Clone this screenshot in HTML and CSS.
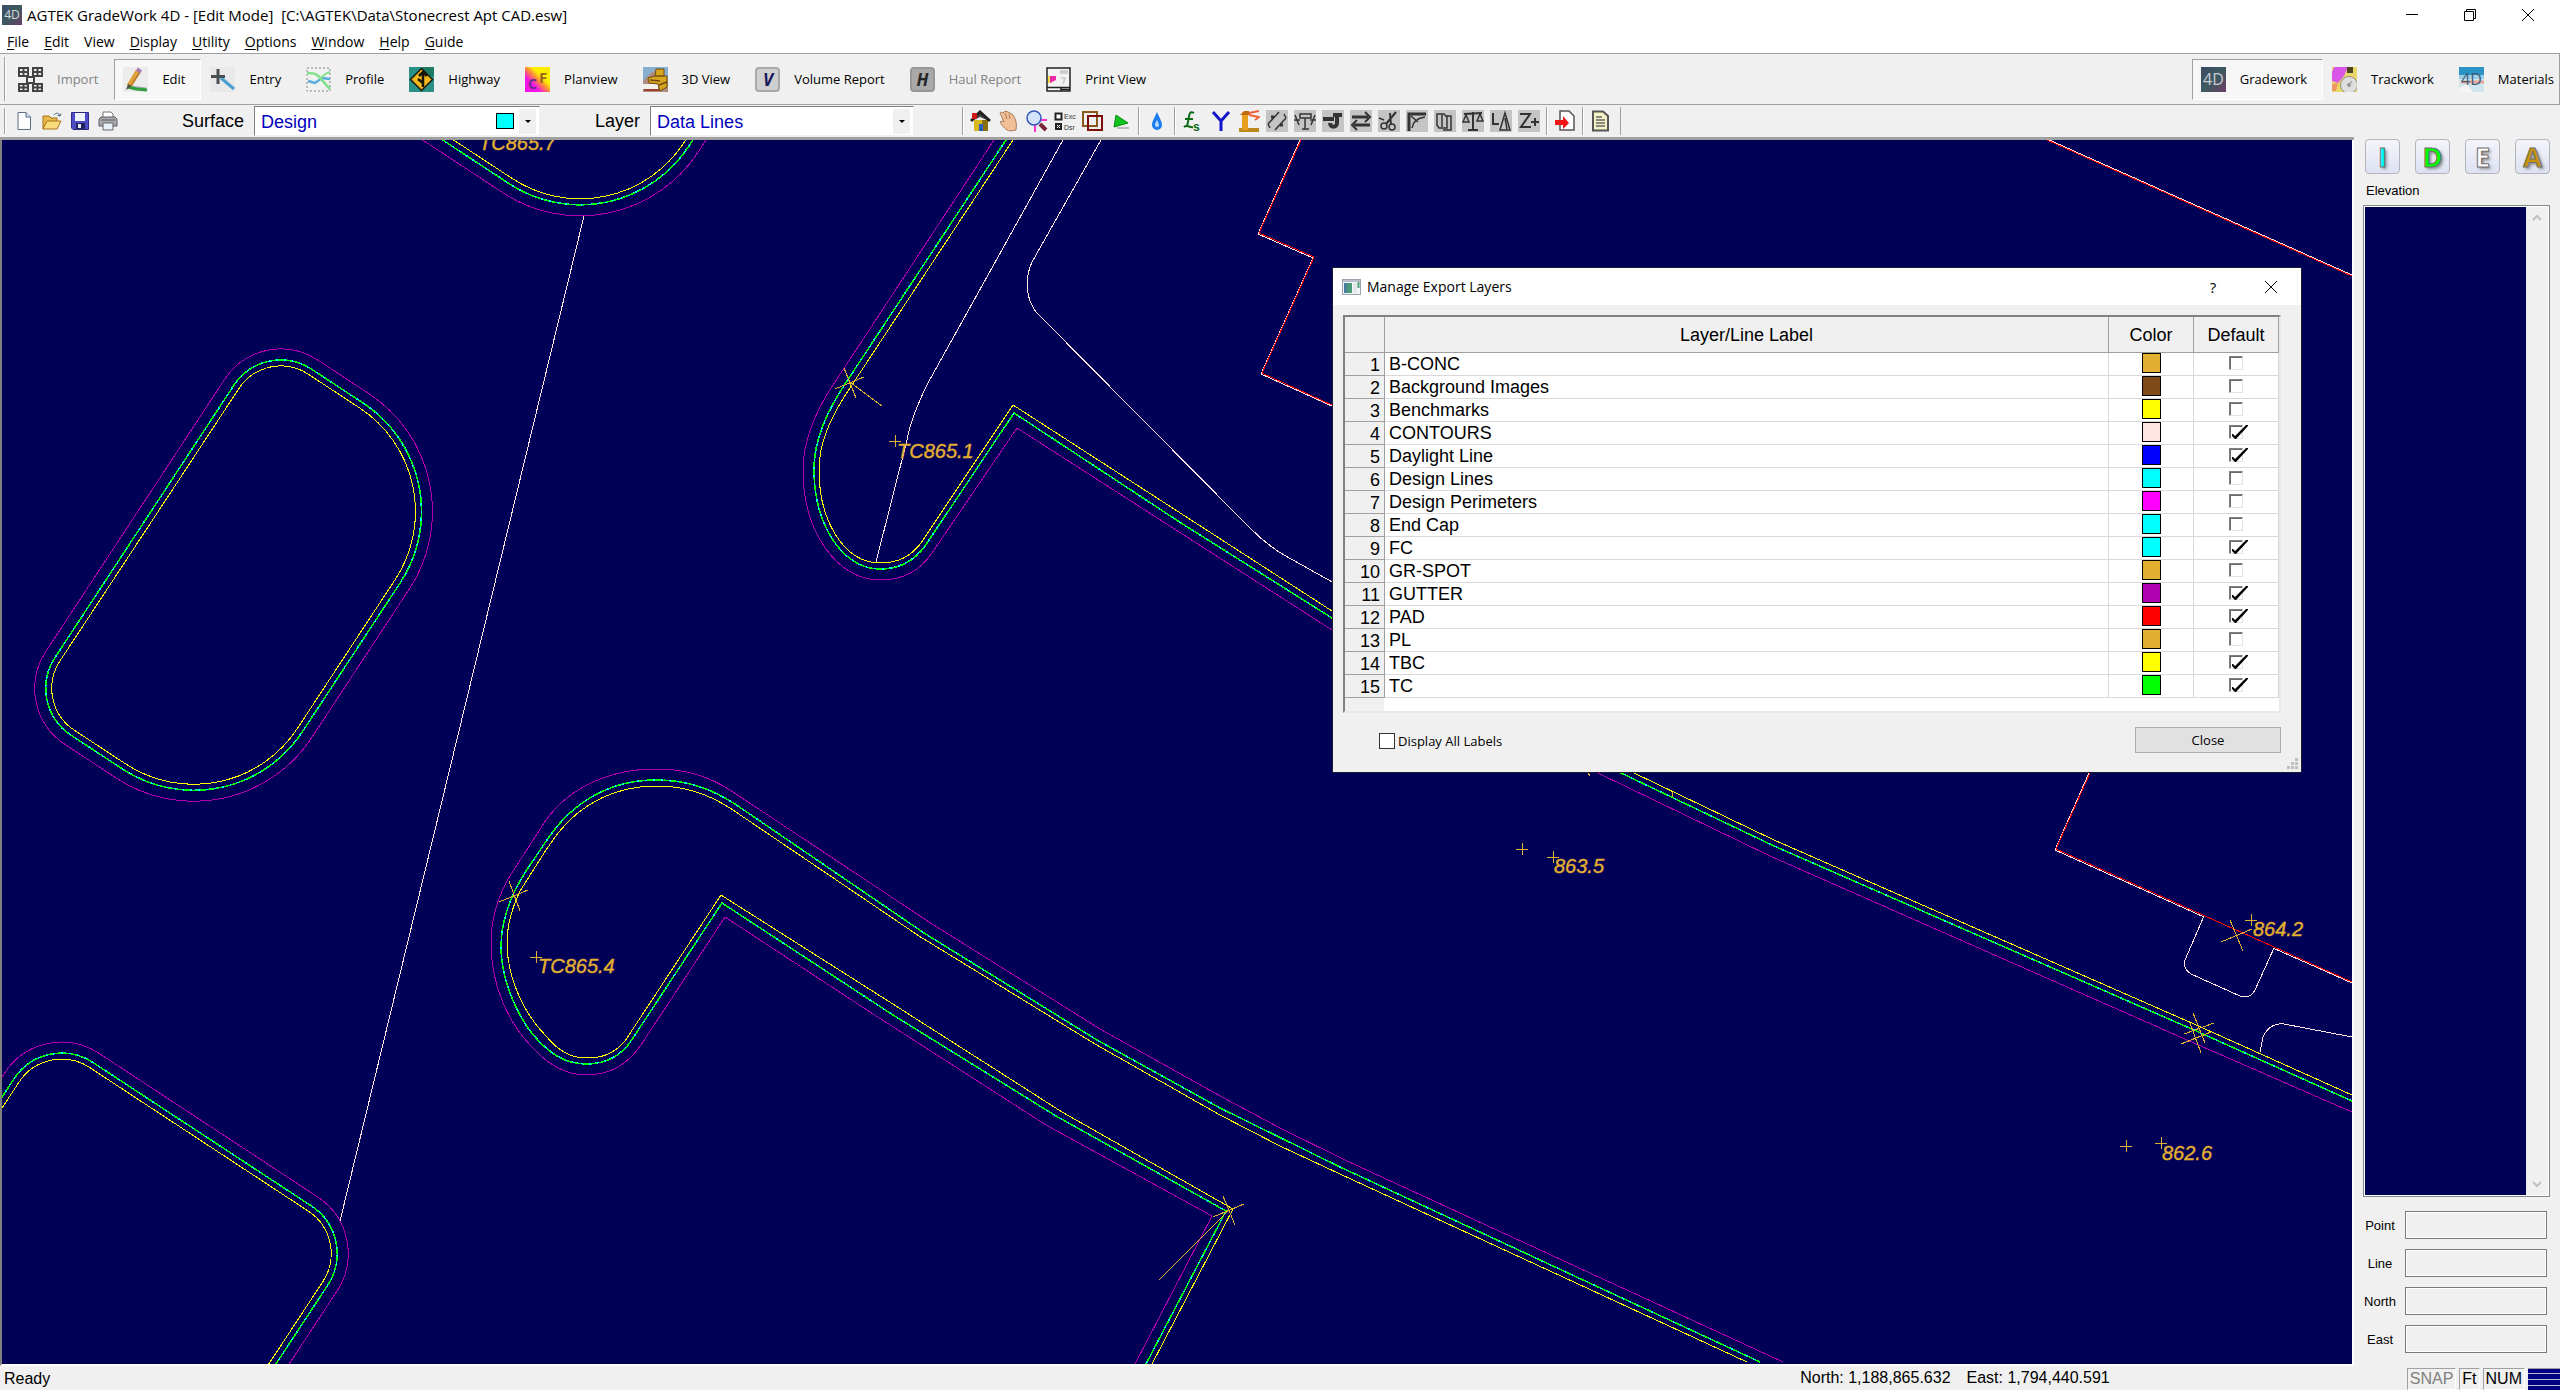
FILE: index.html
```html
<!DOCTYPE html>
<html lang="en">
<head>
    <meta charset="UTF-8">
    <meta name="viewport" content="width=device-width, initial-scale=1.0">
    <title>AGTEK GradeWork 4D</title>
    <link rel="stylesheet" href="styles.css">
</head>
<body>
    <header class="titlebar">
        <svg class="app-icon" viewBox="0 0 20 20">
            <defs>
                <linearGradient id="dusk" x1="0" y1="0" x2="1" y2="1">
                    <stop offset="0" stop-color="#3c4a62"/>
                    <stop offset="0.5" stop-color="#3d5a60"/>
                    <stop offset="1" stop-color="#6b3f66"/>
                </linearGradient>
            </defs>
            <rect width="20" height="20" fill="url(#dusk)"/>
            <text x="10" y="14" text-anchor="middle" font-size="12" fill="#d5d8de">4D</text>
        </svg>
        <span class="title">AGTEK GradeWork 4D - [Edit Mode]&nbsp; [C:\AGTEK\Data\Stonecrest Apt CAD.esw]</span>
        <div class="window-buttons">
            <button aria-label="Minimize"><svg viewBox="0 0 12 12"><path d="M0 5.5H12"/></svg></button>
            <button aria-label="Restore"><svg viewBox="0 0 12 12"><path d="M.5 2.5H9.5V11.5H.5ZM2.5 2.5V.5H11.5V9.5H9.5"/></svg></button>
            <button aria-label="Close window"><svg viewBox="0 0 12 12"><path d="M0 0L12 12M12 0L0 12"/></svg></button>
        </div>
    </header>

    <nav class="menubar">
        <button><u>F</u>ile</button>
        <button><u>E</u>dit</button>
        <button>View</button>
        <button><u>D</u>isplay</button>
        <button><u>U</u>tility</button>
        <button><u>O</u>ptions</button>
        <button><u>W</u>indow</button>
        <button><u>H</u>elp</button>
        <button><u>G</u>uide</button>
    </nav>

    <div class="toolbar">
        <span class="grip"></span>
        <button class="mode" disabled>
            <svg viewBox="0 0 25 25" fill="none" stroke="#444" stroke-width="2">
                <path d="M1 1H10V9H1ZM5.500 1V9M1 5H10M15 1H24V9H15ZM19.500 1V9M15 5H24M1 17H10V24H1ZM5.500 17V24M1 20.500H10M15 17H24V24H15ZM19.500 17V24M15 20.500H24M9 10H16V16H9Z"/>
            </svg>Import</button>
        <button class="mode active">
            <svg viewBox="0 0 25 25">
                <rect width="25" height="25" fill="#ececec"/>
                <path d="M6 20L23 22" stroke="#9aa" stroke-width="3"/>
                <path d="M5 20L13 22L24 23" stroke="#2f9e3c" stroke-width="3" fill="none"/>
                <path d="M6 19L15 4" stroke="#e0a13a" stroke-width="5"/>
                <path d="M8 19L17 5" stroke="#b87a24" stroke-width="1.500"/>
                <path d="M15 5L17 2" stroke="#a77bb0" stroke-width="5"/>
                <path d="M3 23L5 17L9 19Z" fill="#4a5548"/>
            </svg>Edit</button>
        <button class="mode">
            <svg viewBox="0 0 25 25">
                <rect width="25" height="25" fill="#e9e9e9"/>
                <path d="M11 11L24 22" stroke="#4a9fd0" stroke-width="3"/>
                <path d="M8 2V17M1 9.500H15" stroke="#4a4f52" stroke-width="3"/>
            </svg>Entry</button>
        <button class="mode">
            <svg viewBox="0 0 25 25" fill="none">
                <rect x="1" y="1" width="23" height="23" fill="#f0f1f1" stroke="#888" stroke-dasharray="2 2"/>
                <path d="M2 14L9 16L16 11L24 12" stroke="#55aede" stroke-width="2.500"/>
                <path d="M1 6C10 6 12 8 16 13S22 20 24 22" stroke="#82e08c" stroke-width="2.500"/>
                <path d="M14 13C17 8 20 6 24 5" stroke="#82e08c" stroke-width="2"/>
            </svg>Profile</button>
        <button class="mode">
            <svg viewBox="0 0 25 25">
                <rect width="25" height="25" fill="#2a9187"/>
                <rect x="14" width="11" height="9" fill="#1f7a66"/>
                <path d="M12.500 1.500L23.500 12.500L12.500 23.500L1.500 12.500Z" fill="#f2b91c" stroke="#1c1a10" stroke-width="1.500"/>
                <path d="M14 20V7M10 9L14 5L18 9M14 16L9 12" fill="none" stroke="#17140a" stroke-width="2.500"/>
            </svg>Highway</button>
        <button class="mode">
            <svg viewBox="0 0 25 25">
                <defs>
                    <linearGradient id="plan" x1="0" y1="1" x2="1" y2="0">
                        <stop offset="0.3" stop-color="#f413e8"/>
                        <stop offset="0.5" stop-color="#ff8a3a"/>
                        <stop offset="0.65" stop-color="#fff200"/>
                        <stop offset="1" stop-color="#f8e800"/>
                    </linearGradient>
                </defs>
                <rect width="25" height="25" fill="url(#plan)"/>
                <text x="3" y="22" font-size="14" font-weight="bold" fill="#6b2b8f">C</text>
                <text x="14" y="16" font-size="15" font-weight="bold" fill="#9a6420">F</text>
            </svg>Planview</button>
        <button class="mode">
            <svg viewBox="0 0 25 25">
                <rect width="25" height="14" fill="#87aed0"/>
                <path d="M0 14L8 6L16 2L25 12V25H0Z" fill="#b08a7c"/>
                <path d="M0 17H15V22H0Z" fill="#f4f2ee"/>
                <path d="M1 23H16" stroke="#a04030" stroke-width="2"/>
                <path d="M13 2H21V9H24V20L17 24L15 17L6 16L5 11L12 9Z" fill="#d9a520" stroke="#6d4e10"/>
                <path d="M12 9L21 9M7 13L17 14M16 18L24 15" stroke="#6d4e10" stroke-width="1.500"/>
            </svg>3D View</button>
        <button class="mode">
            <svg viewBox="0 0 25 25">
                <rect x="1" y="1" width="23" height="23" rx="3" fill="#cfcfcf" stroke="#a8a8a8" stroke-width="2"/>
                <text x="13" y="19" text-anchor="middle" font-size="17" font-weight="bold" font-style="italic" fill="#17175c">V</text>
            </svg>Volume Report</button>
        <button class="mode" disabled>
            <svg viewBox="0 0 25 25">
                <rect x="1" y="1" width="23" height="23" rx="3" fill="#a9a9a9" stroke="#979797" stroke-width="2"/>
                <text x="12.500" y="19" text-anchor="middle" font-size="17" font-weight="bold" font-style="italic" fill="#262626">H</text>
            </svg>Haul Report</button>
        <button class="mode">
            <svg viewBox="0 0 25 25">
                <rect x="1" y="1" width="23" height="23" fill="#f3f3f3" stroke="#222" stroke-width="1.500"/>
                <path d="M1 20.500H24M15 20V24M15 22.500H24" stroke="#222" stroke-width="1.500"/>
                <path d="M14 4H22M14 6H22" stroke="#aaa"/>
                <rect x="2" y="9" width="4" height="7" fill="#f5e04a"/>
                <path d="M4 9H10V13L4 16Z" fill="#ee2aa8"/>
                <path d="M15 11H19L17 17" fill="none" stroke="#ccc" stroke-width="1.500"/>
            </svg>Print View</button>

        <div class="products">
            <button class="mode active">
                <svg viewBox="0 0 25 25">
                    <rect width="25" height="25" fill="url(#dusk)"/>
                    <text x="12.500" y="18" text-anchor="middle" font-size="16" fill="#c6cbd2">4D</text>
                </svg>Gradework</button>
            <button class="mode">
                <svg viewBox="0 0 25 25">
                    <rect width="25" height="25" fill="#e8d86a"/>
                    <path d="M2 0H16L12 9L6 16L0 14V5Z" fill="#d957e6"/>
                    <path d="M6 16L4 24H0V17Z" fill="#ee9a60"/>
                    <rect x="15" y="0" width="6" height="6" fill="#4d4420"/>
                    <circle cx="17" cy="18" r="8.500" fill="#dedede" stroke="#97927c"/>
                    <circle cx="17" cy="18" r="2" fill="#999"/>
                    <path d="M17 18L20 14" stroke="#888"/>
                </svg>Trackwork</button>
            <button class="mode">
                <svg viewBox="0 0 25 25">
                    <rect width="25" height="25" fill="#cfe6ee"/>
                    <rect width="25" height="8" fill="#2c93c6"/>
                    <path d="M0 8H25V12H0Z" fill="#9ccfe6"/>
                    <path d="M2 15H25" stroke="#e8a79a" stroke-width="3"/>
                    <path d="M0 21L8 17L14 25H0Z" fill="#f4f4f4"/>
                    <text x="12.500" y="18" text-anchor="middle" font-size="16" fill="#3b5e78">4D</text>
                </svg>Materials</button>
        </div>
    </div>

    <main class="workspace">
        <div class="editor">
            <div class="tools">
                <span class="grip"></span>
                <div class="file-tools">
                    <button aria-label="New"><svg viewBox="0 0 20 20"><path d="M4 1.500H12L16.500 6V18.500H4Z" fill="#fdfdff" stroke="#5b6f86"/><path d="M12 1.500V6H16.500" fill="#cfdcec" stroke="#5b6f86"/></svg></button>
                    <button aria-label="Open"><svg viewBox="0 0 20 20"><path d="M1 18V5H7L9 7H15V10" fill="#e8b84a" stroke="#a87416"/><path d="M1 18L5 10H19L15 18Z" fill="#fbdc7c" stroke="#a87416"/><path d="M12 4C14 1 17 2 18 5M18 5L15.500 4.500M18 5L19 2.500" fill="none" stroke="#55657a"/></svg></button>
                    <button aria-label="Save"><svg viewBox="0 0 20 20"><path d="M1.500 1.500H18.500V18.500H3L1.500 17Z" fill="#4c4cc4" stroke="#2a2a86"/><rect x="5" y="2" width="10" height="8" fill="#eef2fb"/><rect x="6" y="12" width="9" height="6" fill="#23235c"/><rect x="8" y="13" width="3" height="4" fill="#e8e8f4"/></svg></button>
                    <button aria-label="Print"><svg viewBox="0 0 20 20"><path d="M5 1H13L15 3V8H5Z" fill="#fff" stroke="#777"/><path d="M1 8L3 6H17L19 8V15H1Z" fill="#a9abb0" stroke="#5c5e63"/><path d="M5 12H15V19H5Z" fill="#e8f0fa" stroke="#666"/><path d="M3 9H17" stroke="#5c5e63"/></svg></button>
                </div>
                <label class="field-label" for="surface">Surface</label>
                <div class="combo surface">
                    <select id="surface"><option>Design</option></select>
                    <span class="combo-swatch"></span>
                    <span class="combo-arrow"></span>
                </div>
                <label class="field-label layer-label" for="layer">Layer</label>
                <div class="combo layer">
                    <select id="layer"><option>Data Lines</option></select>
                    <span class="combo-arrow"></span>
                </div>
                <div class="view-tools">
                    <span class="sep"></span>
                    <button aria-label="Home"><svg viewBox="0 0 22 22"><path d="M4 10H18V21H4Z" fill="#d8b81c"/><path d="M12 10H18V21H12Z" fill="#8a6f10"/><path d="M2 11L10 3L19 11L10 7Z" fill="#444"/><path d="M1 11L10 2L20 11" fill="none" stroke="#222" stroke-width="3"/><rect x="2" y="3" width="5" height="6" fill="#d01818"/><rect x="9" y="14" width="4" height="7" fill="#2b5fc0"/></svg></button>
                    <button aria-label="Pan"><svg viewBox="0 0 22 22"><path d="M3 5C1 3 3 1 5 3L7 1L10 2L12 3L15 5C18 9 19 14 18 20L12 21C8 20 5 17 2 12L4 11L6 12Z" fill="#f2bf98" stroke="#a97a58"/><path d="M7 3L9 9M11 4L12 9" stroke="#a97a58"/></svg></button>
                    <button aria-label="Zoom"><svg viewBox="0 0 22 22"><path d="M9 22V10H21" fill="none" stroke="#ff2fd0" stroke-width="2"/><circle cx="8" cy="8" r="7" fill="#d4e2fb" stroke="#3257b8" stroke-width="1.500"/><path d="M14 14L20 20" stroke="#7a2438" stroke-width="4"/></svg></button>
                    <button aria-label="Exclude"><svg viewBox="0 0 22 22"><path d="M1.500 3.500H7.500V9.500H1.500Z" fill="#fff" stroke="#222" stroke-width="2"/><path d="M1 13H8V20H1Z" fill="#222"/><path d="M3 15L6 18M6 15L3 18" stroke="#fff"/><text x="10" y="9" font-size="7" fill="#333">Exc</text><text x="10" y="20" font-size="7" fill="#333">Dsr</text></svg></button>
                    <button aria-label="Windows"><svg viewBox="0 0 22 22" fill="none" stroke-width="2"><path d="M1 2H15V16H1Z" stroke="#8a5a1c"/><path d="M6 6H20V20H6Z" stroke="#7d0c0c"/></svg></button>
                    <button aria-label="Run"><svg viewBox="0 0 22 22"><path d="M7 18H19" stroke="#bbb" stroke-width="2"/><path d="M6 5L18 13L4 17Z" fill="#0fc41c" stroke="#0b8a14"/></svg></button>
                    <span class="sep"></span>
                    <button aria-label="Water"><svg viewBox="0 0 22 22"><path d="M11 2C13 7 16 11 16 15A5 5 0 0 1 6 15C6 11 9 7 11 2Z" fill="#1c7df0"/><path d="M11 10C12 12 13 14 13 15A2 2 0 0 1 9 15C9 13 10 12 11 10Z" fill="#b8dcff"/></svg></button>
                    <span class="sep"></span>
                    <button aria-label="Line style"><svg viewBox="0 0 22 22"><path d="M12 3C7 0 7 6 6 12L5 16M2 17C5 14 8 18 11 17M3 9H11" fill="none" stroke="#0a6b12" stroke-width="2"/><text x="11" y="21" font-size="12" font-weight="bold" fill="#0a6b12">s</text></svg></button>
                    <button aria-label="Branch"><svg viewBox="0 0 22 22"><path d="M3 2L11 11L19 2M11 11V21" fill="none" stroke="#1414c8" stroke-width="3"/></svg></button>
                    <button aria-label="Lighthouse"><svg viewBox="0 0 22 22"><path d="M1 20H21" stroke="#b88a20" stroke-width="4"/><path d="M4 20V3H10V20" fill="#e8a01c"/><path d="M2 5L6 1H11V5Z" fill="#c06a10"/><path d="M11 3L21 1M11 5L21 7L17 10" fill="none" stroke="#f0603c" stroke-width="2"/></svg></button>
                    <button aria-label="Offset"><svg class="gray" viewBox="0 0 22 22"><path d="M2 14L13 2M9 20L20 8M2 14L4 18M20 8L18 4"/><path d="M5 7H8M14 15H17" stroke-width="3"/></svg></button>
                    <button aria-label="Trim"><svg class="gray" viewBox="0 0 22 22"><path d="M0 10H6M16 10H22M6 4H17V8H6ZM11 8V19M8 19H15M1 5L5 15M21 5L17 15"/></svg></button>
                    <button aria-label="Join"><svg class="gray" viewBox="0 0 22 22"><path d="M1 9H12M15 3V13C15 18 8 18 8 13M11 5H20" stroke-width="4"/></svg></button>
                    <button aria-label="Swap"><svg class="gray" viewBox="0 0 22 22"><path d="M2 7H18M4 15H20" stroke-width="3"/><path d="M15 2L20 7L15 12M7 10L2 15L7 20" stroke-width="2"/></svg></button>
                    <button aria-label="Cut"><svg class="gray" viewBox="0 0 22 22"><path d="M18 2L8 14M12 3L13 15" stroke-width="2"/><circle cx="6" cy="16" r="3"/><circle cx="14" cy="17" r="3"/><path d="M1 8L6 10"/></svg></button>
                    <button aria-label="Fillet"><svg class="gray" viewBox="0 0 22 22"><path d="M3 21V4H20" stroke-width="3"/><path d="M6 18C7 11 11 8 19 7M5 6L12 12"/></svg></button>
                    <button aria-label="Copy"><svg class="gray" viewBox="0 0 22 22"><path d="M3 4H10L13 7V18H5L3 15ZM8 4V17M11 6H17V20H9" /></svg></button>
                    <button aria-label="Balance"><svg class="gray" viewBox="0 0 22 22"><path d="M2 4L20 3M11 2V19M6 20H16" stroke-width="2"/><path d="M1 12L4 5L7 12ZM15 11L18 4L21 11Z"/></svg></button>
                    <button aria-label="Label slope"><svg class="gray" viewBox="0 0 22 22"><path d="M3 3V14H9" stroke-width="2"/><path d="M15 3L20 20H10ZM15 8L17 19"/></svg></button>
                    <button aria-label="Raise elevation"><svg class="gray" viewBox="0 0 22 22"><path d="M2 4H12L3 17H13M13 12H21M17 8V16" stroke-width="2"/></svg></button>
                    <span class="sep"></span>
                    <button aria-label="Export"><svg viewBox="0 0 22 22"><path d="M6 1H15L20 6V20H6Z" fill="#fff" stroke="#555" stroke-width="1.500"/><path d="M1 10H9V6L15 13L9 19V15H1Z" fill="#f01414"/></svg></button>
                    <span class="sep"></span>
                    <button aria-label="Notes"><svg viewBox="0 0 22 22"><path d="M3 1.500H13L18 6V20.500H3Z" fill="#f4f2c4" stroke="#555" stroke-width="2"/><path d="M6 7H12M6 10H15M6 13H15M6 16H15" stroke="#666" stroke-width="1.500"/></svg></button>
                </div>
            </div>

            <div class="plan">
                <svg class="drawing" viewBox="2 140 2350 1224" preserveAspectRatio="xMinYMin slice">
                    <defs>
                        <!-- centre curb lines, stroked twice -->
                        <g id="curb">
                            <g transform="rotate(33.3)">
                                <path d="M463 137.500H524.500A130 130 0 0 1 654.500 267.500V445.500A130 130 0 0 1 524.500 575.500H463A56 56 0 0 1 407 519.500V193.500A56 56 0 0 1 463 137.500Z"/>
                                <path d="M604 1100V894A57 57 0 0 1 661 837H922.500A57 57 0 0 1 979.500 894V1100"/>
                                <path d="M656 -400V-256A130 130 0 0 1 526 -126H300"/>
                            </g>
                            <path d="M1006 140L849 378C826 412 814 440 814 470C814 525 843 569 880 569C900 569 914 561 925 546L1014 413L1181 523L1332 618L1480 702L1621 773L1774 846L2194 1030L2352 1101"/>
                            <path d="M1760 1362L1568 1273L1340 1167L1220 1108L1097 1040L924 933L735 804C710 788 686 780 656 780C612 780 575 800 549 837L528 868C510 895 501 922 501 947C501 980 518 1018 536 1038C552 1056 568 1064 586 1064C606 1064 622 1056 633 1038L722 903L893 1015L1056 1116L1226 1211L1146 1364"/>
                        </g>
                        <path id="cross" d="M-6 0H6M0 -6V6"/>
                    </defs>
                    <g class="contour">
                        <path d="M584 216L340 1221"/>
                        <path d="M1063 140L928 383C916 407 910 424 907 440L876 562"/>
                        <path d="M1101 140L1032 262C1024 280 1026 298 1036 312L1250 528C1262 540 1272 548 1284 555L1334 583"/>
                        <path d="M2204 916L2185 960C2183 966 2185 970 2191 974L2240 996C2248 998 2252 996 2255 990L2274 948"/>
                        <path d="M2260 1052L2263 1037C2267 1028 2274 1023 2284 1024L2352 1037"/>
                        <path d="M1300 140L1258 234L1313 258L1261 374L1334 407"/>
                        <path d="M2089 773L2055 850L2204 917M2273 948L2352 983M2047 139L2352 275"/>
                    </g>
                    <path class="pad" d="M1301 140L1259 233L1314 257L1262 373L1334 406M2090 773L2056 849L2352 982M2047 140L2352 276"/>
                    <g class="gutter">
                        <g transform="rotate(33.3)">
                            <path d="M463 126.500H524.500A141 141 0 0 1 665.500 267.500V445.500A141 141 0 0 1 524.500 586.500H463A67 67 0 0 1 396 519.500V193.500A67 67 0 0 1 463 126.500Z"/>
                            <path d="M593 1100V894A68 68 0 0 1 661 826H922.500A68 68 0 0 1 990.500 894V1100"/>
                            <path d="M667 -400V-256A141 141 0 0 1 526 -115H300"/>
                        </g>
                        <path d="M994 140L835 382C814 413 803 442 803 470C803 532 837 580 880 580C904 580 920 571 932 553L1017 428L1332 630L1460 702L1598 773L1770 856L2194 1043L2352 1112"/>
                        <path d="M1783 1362L1345 1160L1280 1128L1222 1097L1100 1029L929 922L730 790C706 775 684 769 656 769C610 769 570 787 546 820L508 879C496 901 491 922 491 943C491 985 508 1022 531 1046C548 1065 567 1075 586 1075C609 1075 628 1064 641 1045L725 917L870 1012L1046 1125L1212 1216L1135 1364"/>
                    </g>
                    <use href="#curb" class="face"/>
                    <use href="#curb" class="top"/>
                    <g class="back">
                        <g transform="rotate(33.3)">
                            <path d="M463 143.500H524.500A124 124 0 0 1 648.500 267.500V445.500A124 124 0 0 1 524.500 569.500H463A50 50 0 0 1 413 519.500V193.500A50 50 0 0 1 463 143.500Z"/>
                            <path d="M610 1100V894A51 51 0 0 1 661 843H922.500A51 51 0 0 1 973.500 894V1100"/>
                            <path d="M650 -400V-256A124 124 0 0 1 526 -132H300"/>
                        </g>
                        <path d="M1013 140L852 385C830 417 819 443 819 470C819 522 845 563 880 563C899 563 911 556 921 543L1013 405L1332 611L1480 693L1634 773L1774 840L2194 1024L2352 1095"/>
                        <path d="M1747 1362L1340 1174L1280 1146L1220 1115L1095 1044L919 936L730 808C706 793 684 786 656 786C616 786 582 803 558 833L546 850L520 891C511 910 507 928 507 943C507 980 526 1016 546 1036C558 1051 572 1058 586 1058C602 1058 614 1054 625 1041L721 895L896 1006L1062 1112L1233 1209L1152 1364"/>
                    </g>
                    <g class="marks">
                        <path d="M844 368L856 398M835 389L864 377M851 383L882 406"/>
                        <path d="M509 881L520 911M499 902L528 890"/>
                        <path d="M1223 1196L1235 1225M1213 1217L1244 1204M1229 1210L1159 1280"/>
                        <path d="M2230 920L2243 951M2221 942L2252 929"/>
                        <path d="M2193 1013L2205 1043M2184 1034L2214 1023M2190 1023L2201 1053M2181 1044L2211 1032"/>
                        <path d="M1588 773L1590 776M1672 792V797"/>
                        <use href="#cross" x="895" y="441"/>
                        <use href="#cross" x="536" y="957"/>
                        <use href="#cross" x="1522" y="849"/>
                        <use href="#cross" x="1553" y="857"/>
                        <use href="#cross" x="2126" y="1146"/>
                        <use href="#cross" x="2161" y="1143"/>
                        <use href="#cross" x="2251" y="920"/>
                    </g>
                    <g class="elevations">
                        <text x="479" y="150">TC865.7</text>
                        <text x="897" y="458">TC865.1</text>
                        <text x="538" y="973">TC865.4</text>
                        <text x="1554" y="873">863.5</text>
                        <text x="2253" y="936">864.2</text>
                        <text x="2162" y="1160">862.6</text>
                    </g>
                </svg>
            </div>
        </div>

        <aside class="side">
            <div class="surface-buttons">
                <button class="existing">I</button>
                <button class="design">D</button>
                <button class="extra">E</button>
                <button class="all">A</button>
            </div>
            <span class="side-title">Elevation</span>
            <div class="elevation-list">
                <div class="scroll">
                    <svg viewBox="0 0 10 8"><path d="M1 6L5 2L9 6"/></svg>
                    <svg viewBox="0 0 10 8"><path d="M1 2L5 6L9 2"/></svg>
                </div>
            </div>
            <form class="coords">
                <label for="point">Point</label><input id="point" type="text" readonly>
                <label for="line">Line</label><input id="line" type="text" readonly>
                <label for="north">North</label><input id="north" type="text" readonly>
                <label for="east">East</label><input id="east" type="text" readonly>
            </form>
        </aside>
    </main>

    <footer class="statusbar">
        <span class="ready">Ready</span>
        <span class="position"><span>North: 1,188,865.632</span><span>East: 1,794,440.591</span></span>
        <span class="cell off">SNAP</span>
        <span class="cell">Ft</span>
        <span class="cell">NUM</span>
        <span class="stripes"></span>
    </footer>

    <section class="dialog" role="dialog" aria-labelledby="dialog-title">
        <div class="dialog-bar">
            <svg class="dialog-icon" viewBox="0 0 19 16"><rect x=".5" y=".5" width="18" height="15" fill="#f4f6f8" stroke="#9aa3ad"/><path d="M1 2H18" stroke="#b9c2cc" stroke-width="2"/><rect x="2" y="4" width="8" height="10" fill="#4b9a7c"/><rect x="2" y="4" width="3" height="10" fill="#477f9c"/><rect x="11" y="4" width="4" height="10" fill="#e4e6e8"/><path d="M16.500 3V9" stroke="#4ba07c" stroke-width="2"/></svg>
            <h2 id="dialog-title">Manage Export Layers</h2>
            <button aria-label="Help">?</button>
            <button aria-label="Close dialog"><svg viewBox="0 0 12 12"><path d="M0 0L12 12M12 0L0 12"/></svg></button>
        </div>
        <div class="dialog-body">
            <div class="grid-frame">
                <table>
                    <thead>
                        <tr><th class="num"></th><th>Layer/Line Label</th><th class="color">Color</th><th class="default">Default</th></tr>
                    </thead>
                    <tbody>
                        <tr><th>1</th><td>B-CONC</td><td><i class="swatch gold"></i></td><td><input type="checkbox" aria-label="B-CONC"></td></tr>
                        <tr><th>2</th><td>Background Images</td><td><i class="swatch brown"></i></td><td><input type="checkbox" aria-label="Background Images"></td></tr>
                        <tr><th>3</th><td>Benchmarks</td><td><i class="swatch yellow"></i></td><td><input type="checkbox" aria-label="Benchmarks"></td></tr>
                        <tr><th>4</th><td>CONTOURS</td><td><i class="swatch rose"></i></td><td><input type="checkbox" aria-label="CONTOURS" checked></td></tr>
                        <tr><th>5</th><td>Daylight Line</td><td><i class="swatch blue"></i></td><td><input type="checkbox" aria-label="Daylight Line" checked></td></tr>
                        <tr><th>6</th><td>Design Lines</td><td><i class="swatch cyan"></i></td><td><input type="checkbox" aria-label="Design Lines"></td></tr>
                        <tr><th>7</th><td>Design Perimeters</td><td><i class="swatch magenta"></i></td><td><input type="checkbox" aria-label="Design Perimeters"></td></tr>
                        <tr><th>8</th><td>End Cap</td><td><i class="swatch cyan"></i></td><td><input type="checkbox" aria-label="End Cap"></td></tr>
                        <tr><th>9</th><td>FC</td><td><i class="swatch cyan"></i></td><td><input type="checkbox" aria-label="FC" checked></td></tr>
                        <tr><th>10</th><td>GR-SPOT</td><td><i class="swatch gold"></i></td><td><input type="checkbox" aria-label="GR-SPOT"></td></tr>
                        <tr><th>11</th><td>GUTTER</td><td><i class="swatch purple"></i></td><td><input type="checkbox" aria-label="GUTTER" checked></td></tr>
                        <tr><th>12</th><td>PAD</td><td><i class="swatch red"></i></td><td><input type="checkbox" aria-label="PAD" checked></td></tr>
                        <tr><th>13</th><td>PL</td><td><i class="swatch gold"></i></td><td><input type="checkbox" aria-label="PL"></td></tr>
                        <tr><th>14</th><td>TBC</td><td><i class="swatch yellow"></i></td><td><input type="checkbox" aria-label="TBC" checked></td></tr>
                        <tr><th>15</th><td>TC</td><td><i class="swatch green"></i></td><td><input type="checkbox" aria-label="TC" checked></td></tr>
                    </tbody>
                </table>
                <div class="grid-rest"></div>
            </div>
            <div class="dialog-foot">
                <label class="show-all"><input type="checkbox">Display All Labels</label>
                <button class="close">Close</button>
            </div>
        </div>
        <svg class="resize" viewBox="0 0 12 12"><path d="M8 0H11V3H8ZM4 4H7V7H4ZM8 4H11V7H8ZM0 8H3V11H0ZM4 8H7V11H4ZM8 8H11V11H8Z"/></svg>
    </section>
</body>
</html>
```
FILE: styles.css
```css
* {
    box-sizing: border-box;
}
body {
    margin: 0;
    height: 100vh;
    display: flex;
    flex-direction: column;
    position: relative;
    overflow: hidden;
    background: #f0f0f0;
    color: #000;
    font-family: "Open Sans", "Noto Sans", sans-serif;
    font-size: 14px;
}
button {
    padding: 0;
    border: 0;
    background: none;
    color: inherit;
    font: inherit;
}
svg {
    display: block;
}

/* title and menu */
.titlebar {
    display: flex;
    align-items: center;
    height: 29px;
    padding-left: 2px;
    background: #fff;
}
.app-icon {
    width: 20px;
    height: 20px;
    margin-right: 5px;
}
.title {
    font-size: 15px;
}
.window-buttons {
    display: flex;
    margin-left: auto;
    margin-right: 3px;
}
.window-buttons button {
    width: 58px;
    height: 28px;
    display: flex;
    align-items: center;
    justify-content: center;
}
.window-buttons svg,
.dialog-bar button svg {
    width: 12px;
    height: 12px;
    fill: none;
    stroke: #000;
}
.menubar {
    display: flex;
    gap: 15px;
    height: 24px;
    padding: 0 7px;
    background: #fff;
}
.menubar u {
    text-underline-offset: 2px;
}

/* mode toolbar */
.toolbar {
    display: flex;
    align-items: center;
    height: 52px;
    padding: 0 1px;
    border-top: 1px solid #a0a0a0;
    border-bottom: 1px solid #a0a0a0;
    border-right: 1px solid #a0a0a0;
    font-size: 13px;
}
.grip {
    align-self: stretch;
    width: 2px;
    margin: 3px 3px;
    border-left: 1px solid #a0a0a0;
    border-right: 1px solid #fff;
}
.mode {
    display: flex;
    align-items: center;
    gap: 14px;
    height: 41px;
    padding: 0 15px 0 8px;
    border: 1px solid transparent;
    white-space: nowrap;
}
.mode svg {
    flex: none;
    width: 25px;
    height: 25px;
}
.mode.active {
    background: #f7f7f7;
    border-color: #a0a0a0 #fff #fff #a0a0a0;
}
.mode:disabled {
    color: #838383;
}
.products {
    display: flex;
    margin-left: auto;
}
.products .mode:last-child {
    padding-right: 3px;
}

/* workspace */
.workspace {
    flex: 1;
    display: flex;
    min-height: 0;
}
.editor {
    flex: 1;
    display: flex;
    flex-direction: column;
    min-width: 0;
}
.tools {
    display: flex;
    align-items: center;
    height: 35px;
    padding-left: 1px;
    border-bottom: 3px solid #a0a0a0;
    font-family: "Liberation Sans", Arial, sans-serif;
    font-size: 18px;
}
.file-tools {
    display: flex;
    gap: 8px;
    margin-left: 5px;
}
.file-tools svg {
    width: 20px;
    height: 20px;
}
.field-label {
    margin-left: 64px;
    margin-right: 10px;
}
.layer-label {
    margin-left: 55px;
}
.combo {
    position: relative;
    height: 30px;
    border: 1px solid;
    border-color: #808080 #f0f0f0 #f0f0f0 #808080;
    background: #fff;
}
.combo.surface {
    width: 286px;
}
.combo.layer {
    width: 264px;
}
.combo select {
    appearance: none;
    width: 100%;
    height: 28px;
    padding: 2px 6px 0;
    border: 0;
    background: none;
    color: #0000c0;
    font: inherit;
}
.combo-swatch {
    position: absolute;
    top: 6px;
    right: 25px;
    width: 18px;
    height: 16px;
    border: 1px solid #000;
    background: #0ff;
}
.combo-arrow {
    position: absolute;
    top: 2px;
    right: 3px;
    width: 17px;
    height: 25px;
    background: #f0f0f0;
}
.combo-arrow::after {
    content: "";
    position: absolute;
    left: 6px;
    top: 11px;
    border: 3px solid transparent;
    border-top-color: #000;
    border-bottom: 0;
}
.view-tools {
    display: flex;
    align-items: center;
    gap: 6px;
    margin-left: 48px;
    padding-right: 8px;
    border-right: 1px solid #a0a0a0;
}
.view-tools svg {
    width: 22px;
    height: 22px;
}
.sep {
    width: 2px;
    height: 28px;
    border-left: 1px solid #a0a0a0;
    border-right: 1px solid #fff;
}
.gray {
    background: #c4c4c4;
    fill: none;
    stroke: #333;
    stroke-width: 1.5px;
}

/* plan view */
.plan {
    flex: 1;
    min-height: 0;
    border: 2px solid;
    border-width: 0 2px 2px;
    border-color: #a0a0a0 #fff #fff #808080;
    background: #000057;
    overflow: hidden;
}
.drawing {
    width: 100%;
    height: 100%;
    fill: none;
    stroke-width: 1;
    shape-rendering: crispEdges;
}
.contour {
    stroke: #ffe4e1;
}
.pad {
    stroke: #f00;
}
.gutter {
    stroke: #b000b0;
}
.face {
    stroke: #0ff;
    stroke-width: 1.5px;
}
.top {
    stroke: #0f0;
    stroke-width: 1.5px;
    stroke-dasharray: 6 2;
}
.back {
    stroke: #ff0;
}
.marks {
    stroke: #e3af30;
}
.elevations {
    fill: #e3af30;
    stroke: #e3af30;
    stroke-width: 0.4px;
    font: italic 20px "Liberation Sans", Arial, sans-serif;
}

/* side panel */
.side {
    width: 206px;
    display: flex;
    flex-direction: column;
    padding: 34px 10px 13px 9px;
    font-family: "Liberation Sans", Arial, sans-serif;
    font-size: 13px;
}
.surface-buttons {
    display: flex;
    gap: 15px;
    padding-left: 2px;
}
.surface-buttons button {
    flex: none;
    width: 35px;
    height: 35px;
    border: 1px solid #b4b4bc;
    border-radius: 4px;
    background: linear-gradient(#f4f4fa, #dde2f2);
    font: 27px/31px "Open Sans", sans-serif;
    font-weight: bold;
    text-shadow: 2px 2px 3px #888;
    -webkit-text-stroke: 1px #707070;
}
.surface-buttons .existing {
    color: #0ff;
}
.surface-buttons .design {
    color: #0f0;
}
.surface-buttons .extra {
    color: #fff;
}
.surface-buttons .all {
    color: #c8940c;
}
.side-title {
    margin: 9px 3px 6px;
    line-height: 16px;
}
.elevation-list {
    flex: 1;
    border: 1px solid #828790;
    outline: 1px solid #fff;
    outline-offset: -2px;
    padding: 1px;
    display: flex;
    background: #000057;
}
.scroll {
    width: 22px;
    margin-left: auto;
    display: flex;
    flex-direction: column;
    justify-content: space-between;
    align-items: center;
    padding: 7px 0;
    background: #f0f0f0;
}
.scroll svg {
    width: 10px;
    height: 8px;
    fill: none;
    stroke: #c0c0c0;
    stroke-width: 2px;
}
.coords {
    display: grid;
    grid-template-columns: 32px 142px;
    column-gap: 9px;
    row-gap: 10px;
    align-items: center;
    margin-top: 14px;
    padding-left: 1px;
}
.coords label {
    text-align: center;
}
.coords input {
    width: 142px;
    height: 28px;
    border: 1px solid #7a7a7a;
    box-shadow: inset 0 0 0 1px #fff;
    background: #f0f0f0;
}

/* status bar */
.statusbar {
    display: flex;
    align-items: stretch;
    gap: 3px;
    height: 24px;
    padding-top: 2px;
    font-family: "Liberation Sans", Arial, sans-serif;
    font-size: 16px;
    line-height: 20px;
}
.ready {
    padding-left: 4px;
    line-height: 22px;
}
.position {
    display: flex;
    gap: 16px;
    margin-left: auto;
    margin-right: 294px;
}
.cell {
    padding: 0 2px;
    border: 1px solid;
    border-color: #a0a0a0 #fff #fff #a0a0a0;
}
.off {
    color: #808080;
}
.stripes {
    width: 32px;
    border-top: 1px solid #a0a0a0;
    background: repeating-linear-gradient(#000080 0 4px, #b8b8d8 4px 5px, #000080 5px 6px);
}

/* export layers dialog */
.dialog {
    position: absolute;
    left: 1333px;
    top: 268px;
    width: 968px;
    background: #f0f0f0;
    outline: 1px solid #1a1a30;
}
.dialog-bar {
    display: flex;
    align-items: center;
    height: 37px;
    padding-left: 9px;
    background: #fff;
}
.dialog-icon {
    width: 19px;
    height: 16px;
    margin-right: 6px;
}
.dialog-bar h2 {
    margin: 0 auto 0 0;
    font-size: 14px;
    font-weight: normal;
}
.dialog-bar button {
    width: 58px;
    display: flex;
    justify-content: center;
    font-size: 15px;
}
.dialog-bar button:last-child {
    margin-right: 1px;
}
.dialog-body {
    padding: 10px 20px 19px 10px;
}
.grid-frame {
    border: 2px solid;
    border-color: #808080 #e8e8e8 #e8e8e8 #808080;
    background: #fff;
}
table {
    width: 100%;
    table-layout: fixed;
    border-collapse: separate;
    border-spacing: 0;
    font-family: "Liberation Sans", Arial, sans-serif;
    font-size: 18px;
    line-height: 20px;
}
thead th {
    height: 36px;
    padding: 0;
    border-right: 1px solid #a0a0a0;
    border-bottom: 1px solid #a0a0a0;
    background: #f0f0f0;
    font-weight: normal;
}
.num {
    width: 40px;
}
.color,
.default {
    width: 85px;
}
tbody th {
    height: 23px;
    padding: 2px 4px 0 0;
    border-right: 1px solid #a0a0a0;
    border-bottom: 1px solid #a0a0a0;
    background: #f0f0f0;
    font-weight: normal;
    text-align: right;
}
tbody td {
    height: 23px;
    padding: 0 4px 1px;
    border-right: 1px solid #d9d9d9;
    border-bottom: 1px solid #d9d9d9;
}
tbody td:nth-child(n+3) {
    padding: 0 0 2px;
}
.swatch {
    display: block;
    width: 19px;
    height: 20px;
    margin: 0 auto;
    border: 1px solid #000;
}
.gold { background: #e3af30; }
.brown { background: #7d4a18; }
.yellow { background: #ff0; }
.rose { background: #ffe4e1; }
.blue { background: #00f; }
.cyan { background: #0ff; }
.magenta { background: #f0f; }
.purple { background: #b000b0; }
.red { background: #f00; }
.green { background: #0f0; }
td input {
    appearance: none;
    display: block;
    position: relative;
    width: 14px;
    height: 14px;
    margin: 0 auto;
    border: 1px solid;
    border-color: #808080 #e3e3e3 #e3e3e3 #808080;
    box-shadow: inset 1px 1px #696969;
}
td input:checked::after {
    content: "";
    position: absolute;
    left: 2px;
    top: -1px;
    width: 16px;
    height: 14px;
    background: #000;
    clip-path: polygon(0 9px, 1px 9px, 3px 11px, 14px 0, 16px 0, 16px 1px, 4px 14px, 3px 14px, 0 11px);
}
.grid-rest {
    width: 39px;
    height: 13px;
    background: #f0f0f0;
}
.dialog-foot {
    display: flex;
    align-items: center;
    justify-content: space-between;
    margin-top: 14px;
    padding-left: 36px;
}
.show-all {
    display: flex;
    align-items: center;
    gap: 3px;
    padding-top: 2px;
    font-size: 13px;
}
.show-all input {
    appearance: none;
    width: 16px;
    height: 16px;
    margin: 0;
    border: 1px solid #333;
    background: #fff;
}
.close {
    width: 146px;
    height: 26px;
    border: 1px solid #adadad;
    background: #e1e1e1;
    font-size: 13px;
}
.resize {
    position: absolute;
    right: 2px;
    bottom: 2px;
    width: 12px;
    height: 12px;
    fill: #bfbfbf;
}
```
